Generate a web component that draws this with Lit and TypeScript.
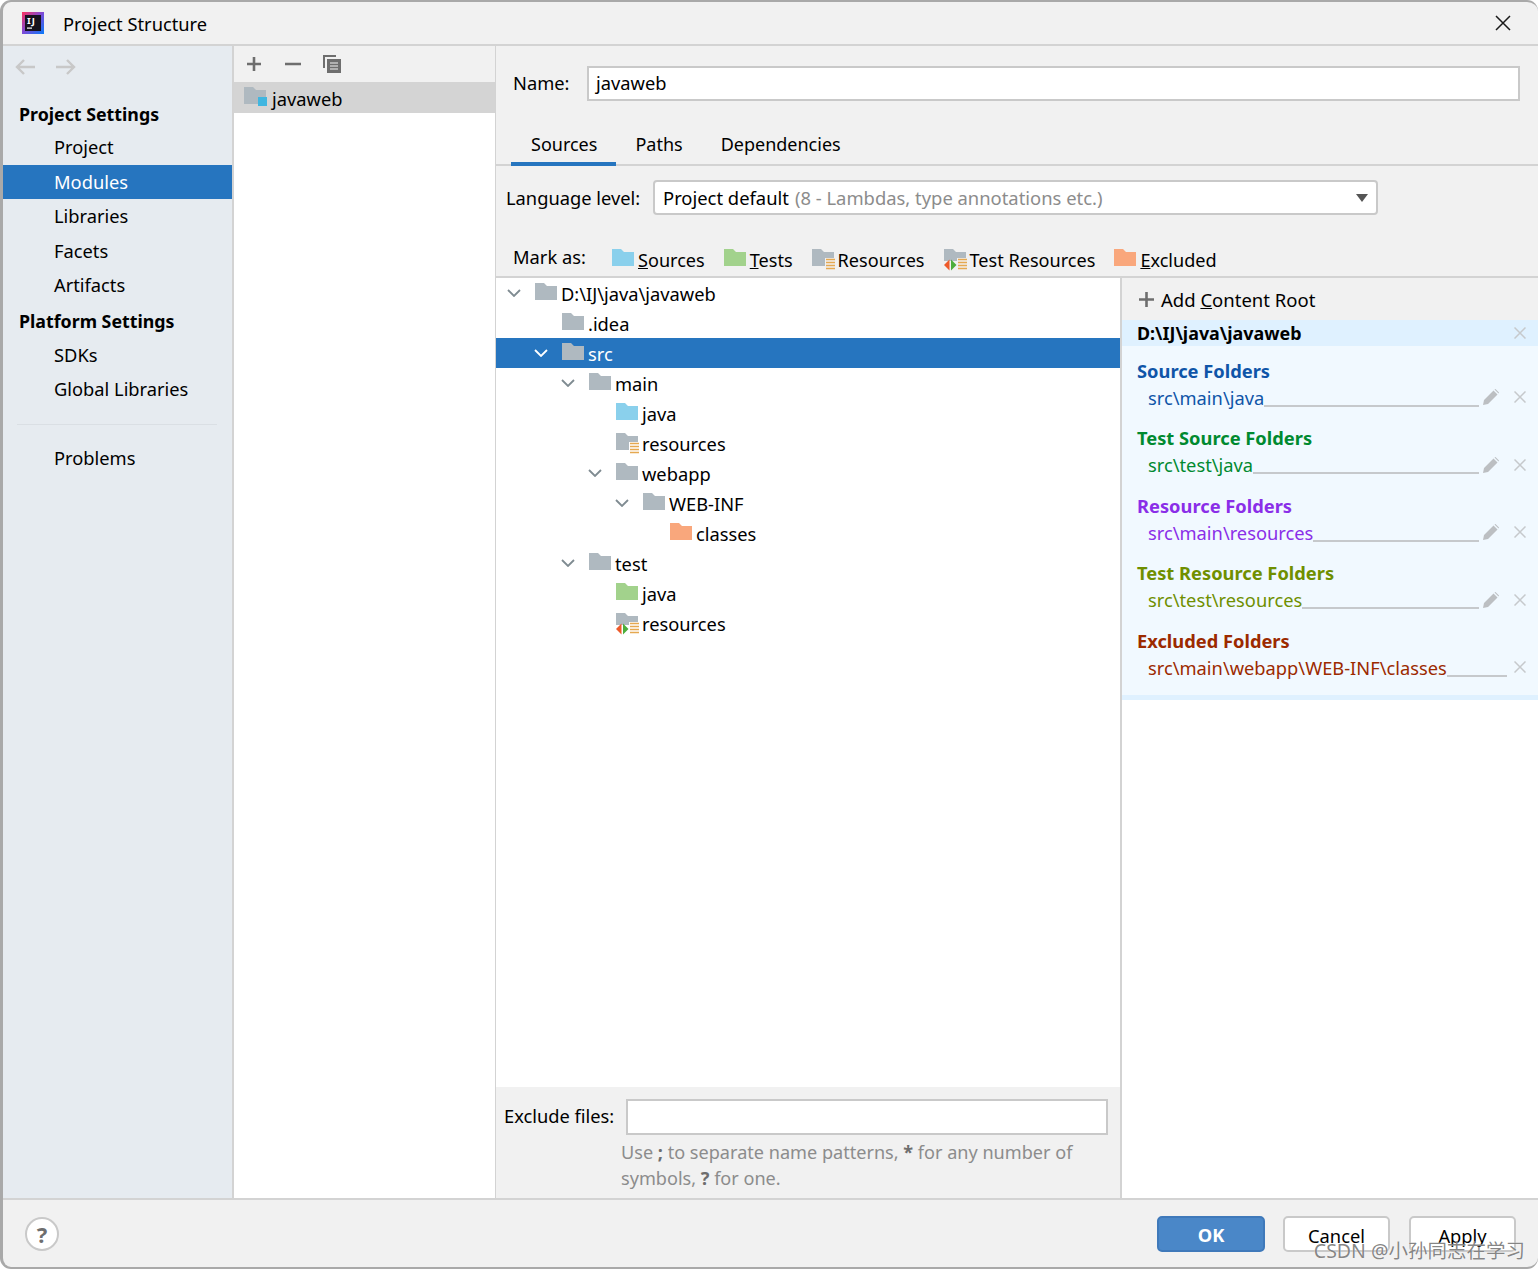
import { LitElement, html, css, svg } from 'lit';
import { customElement } from 'lit/decorators.js';

type FolderKind = 'plain' | 'source' | 'test' | 'resource' | 'testres' | 'excluded' | 'module';

const FOLDER_COLORS: Record<string, string> = {
  plain: '#afb9c0',
  module: '#afb9c0',
  resource: '#afb9c0',
  testres: '#afb9c0',
  source: '#8ad0ec',
  test: '#a2d28c',
  excluded: '#f9a77c',
};

const FOLDER_PATHS: Record<string, string> = {
  resource: 'M0 1h9l3 3h10v6h-9v8H0z',
  testres: 'M0 1h9l3 3h10v6h-9v3H0z',
};

function folder(kind: FolderKind) {
  const hasStripes = kind === 'resource' || kind === 'testres';
  return html`<svg class="folder" width="24" height="24" viewBox="0 0 24 24">
    <path d=${FOLDER_PATHS[kind] ?? 'M0 1h9l3 3h10v14H0z'} fill=${FOLDER_COLORS[kind]}/>
    ${hasStripes
      ? svg`<path d="M14 11.500h9M14 14.500h9M14 17.500h9M14 20.500h9" stroke="#e5a951" stroke-width="1.600"/>`
      : ''}
    ${kind === 'testres'
      ? svg`<path d="M5.500 11.500v11L0 17z" fill="#ee5a2a"/><path d="M7 11.500v11l5.500-5.500z" fill="#4cae3c"/>`
      : ''}
    ${kind === 'module' ? svg`<rect x="14" y="11" width="9" height="9" fill="#40b6e0"/>` : ''}
  </svg>`;
}

const closeIcon = html`<svg width="12" height="12" viewBox="0 0 12 12">
  <path d="M.5.500l11 11M11.500.500l-11 11" stroke="#c6c9cc" stroke-width="1.500" fill="none"/>
</svg>`;

const pencilIcon = html`<svg class="pencil" width="16" height="16" viewBox="0 0 16 16">
  <path d="M0 16l1-5L10.500 1.500l4 4L5 15z M11.500.500l1-.500 3.500 3.500-.5 1z" fill="#bcbfc2"/>
</svg>`;

const chevron = (color: string) => html`<svg width="14" height="8" viewBox="0 0 14 8">
  <path d="M1 1l6 6 6-6" stroke=${color} stroke-width="1.800" fill="none"/>
</svg>`;

const TREE: { depth: number; label: string; kind: FolderKind; open?: boolean; selected?: boolean }[] = [
  { depth: 0, label: 'D:\\IJ\\java\\javaweb', kind: 'plain', open: true },
  { depth: 1, label: '.idea', kind: 'plain' },
  { depth: 1, label: 'src', kind: 'plain', open: true, selected: true },
  { depth: 2, label: 'main', kind: 'plain', open: true },
  { depth: 3, label: 'java', kind: 'source' },
  { depth: 3, label: 'resources', kind: 'resource' },
  { depth: 3, label: 'webapp', kind: 'plain', open: true },
  { depth: 4, label: 'WEB-INF', kind: 'plain', open: true },
  { depth: 5, label: 'classes', kind: 'excluded' },
  { depth: 2, label: 'test', kind: 'plain', open: true },
  { depth: 3, label: 'java', kind: 'test' },
  { depth: 3, label: 'resources', kind: 'testres' },
];

const ROOTS = [
  { title: 'Source Folders', path: 'src\\main\\java', cls: 'c-source', edit: true },
  { title: 'Test Source Folders', path: 'src\\test\\java', cls: 'c-test', edit: true },
  { title: 'Resource Folders', path: 'src\\main\\resources', cls: 'c-res', edit: true },
  { title: 'Test Resource Folders', path: 'src\\test\\resources', cls: 'c-testres', edit: true },
  { title: 'Excluded Folders', path: 'src\\main\\webapp\\WEB-INF\\classes', cls: 'c-excl', edit: false },
];

@customElement('app-root')
export class AppRoot extends LitElement {
  static styles = css`
    :host {
      display: block;
      width: 1538px;
      height: 1269px;
      background: #fff;
      font-family: 'Noto Sans', 'Noto Sans CJK SC', sans-serif;
      font-size: 18.300px;
      color: #000;
      overflow: hidden;
    }
    .window {
      position: relative;
      box-sizing: border-box;
      width: 1538px;
      height: 1269px;
      display: flex;
      flex-direction: column;
      background: #f1f1f1;
      border: solid #a9a9a9;
      border-width: 2px 0 2px 3px;
      border-radius: 11px;
      overflow: hidden;
    }
    svg { display: block; flex: none; }

    .title {
      flex: none;
      height: 42px;
      display: flex;
      align-items: center;
      padding-left: 19px;
      border-bottom: 2px solid #d3d3d3;
    }
    .title .name { margin-left: 19px; padding-top: 1px; }
    .title .close { margin-left: auto; margin-right: 27px; }

    .main { flex: 1; display: flex; min-height: 0; }

    .side {
      flex: none;
      width: 229px;
      background: #e6ebf0;
      border-right: 2px solid #d3d3d3;
      padding-top: 6px;
    }
    .nav { display: flex; gap: 19px; padding: 6px 0 0 11px; height: 39px; }
    .side .head { height: 35px; line-height: 36px; padding-left: 16px; font-weight: 700; font-size: 17.800px; }
    .side .head.first { height: 33px; line-height: 35px; }
    .side .item { height: 34.500px; line-height: 34.500px; padding-left: 51px; }
    .side .item.on { background: #2675bf; color: #fff; }
    .side hr { border: 0; height: 1px; background: #dadfe4; margin: 17px 15px 16px 14px; }

    .modules {
      flex: none;
      width: 261px;
      background: #fff;
      border-right: 1px solid #d3d3d3;
    }
    .tools {
      height: 36px;
      background: #f1f1f1;
      display: flex;
      align-items: center;
      gap: 19.500px;
      padding-left: 11px;
    }
    .mod {
      height: 31px;
      background: #d4d4d4;
      display: flex;
      align-items: center;
      padding-left: 10px;
      gap: 4px;
    }
    .mod span { padding-top: 1px; }

    .detail { flex: 1; display: flex; flex-direction: column; min-width: 0; }
    .name-row { flex: none; display: flex; align-items: center; margin-top: 20px; height: 35px; padding-left: 17px; }
    .name-row .lbl { width: 74px; padding-bottom: 2px; }
    .input {
      box-sizing: border-box;
      background: #fff;
      border: 2px solid #c9c9c9;
      display: flex;
      align-items: center;
    }
    .name-row .input { width: 933px; height: 35px; padding: 0 0 2px 7px; }

    .tabs {
      flex: none;
      display: flex;
      margin-top: 23px;
      height: 40px;
      padding-left: 15px;
      border-bottom: 2px solid #d3d3d3;
      font-size: 18px;
    }
    .tab { padding: 0 19px; line-height: 40px; height: 40px; box-sizing: border-box; }
    .tab.on { border-bottom: 4px solid #2675bf; height: 42px; padding: 0 19px 0 20px; }

    .lang { flex: none; display: flex; align-items: center; margin-top: 14px; height: 35px; padding-left: 10px; }
    .lang .lbl { width: 147px; }
    .combo {
      box-sizing: border-box;
      width: 725px;
      height: 35px;
      background: #fff;
      border: 2px solid #c9c9c9;
      border-radius: 4px;
      display: flex;
      align-items: center;
      padding: 0 8px 0 8px;
      font-size: 18.400px;
    }
    .combo .dim { color: #8c8c8c; margin-left: 6px; }
    .combo .arrow { margin-left: auto; width: 0; height: 0; border: 6.500px solid transparent; border-top: 8px solid #555; border-bottom: 0; }

    .mark {
      flex: none;
      box-sizing: border-box;
      height: 63px;
      display: flex;
      align-items: flex-end;
      padding: 0 0 4px 17px;
      border-bottom: 2px solid #d3d3d3;
      font-size: 18.100px;
    }
    .mark .label { width: 99px; margin-bottom: 3px; font-size: 18.300px; }
    .mark .opt { display: flex; align-items: center; gap: 2px; margin-right: 19px; }

    .split { flex: 1; display: flex; min-height: 0; }
    .left { flex: none; width: 624px; display: flex; flex-direction: column; }
    .tree { flex: 1; background: #fff; }
    .row { height: 30px; display: flex; align-items: center; box-sizing: border-box; }
    .row.sel { background: #2675bf; color: #fff; }
    .row .chev { flex: none; width: 28px; }
    .row .folder { margin-right: 2px; margin-top: 2px; }

    .excl { flex: none; height: 111px; box-sizing: border-box; padding: 12px 0 0 8px; }
    .excl .line { display: flex; align-items: center; }
    .excl .lbl { width: 122px; padding-bottom: 3px; }
    .excl .input { width: 482px; height: 36px; }
    .hint { margin: 4px 0 0 117px; width: 460px; line-height: 26px; color: #8c8c8c; font-size: 18.100px; }
    .hint b { color: #6e6e6e; }

    .right { flex: 1; border-left: 2px solid #d3d3d3; display: flex; flex-direction: column; background: #fff; }
    .add { flex: none; height: 42px; background: #f1f1f1; display: flex; align-items: center; padding-left: 16px; gap: 6px; font-size: 18.500px; }
    .root-head {
      flex: none;
      height: 26px;
      background: #dff1ff;
      display: flex;
      align-items: center;
      padding: 0 12px 0 15px;
      font-weight: 700;
      font-size: 17.900px;
      justify-content: space-between;
    }
    .roots { flex: none; height: 349px; box-sizing: border-box; background: #f1f9ff; padding-top: 10.700px; }
    .strip { flex: none; height: 5px; background: #dff1ff; }
    .group { height: 67.500px; }
    .group .t { padding-left: 15px; font-weight: 700; height: 27px; line-height: 27px; }
    .group .p { display: flex; align-items: center; height: 27px; padding: 0 12px 0 26px; }
    .group .rule { flex: 1; border-bottom: 2px solid #c6c9cc; align-self: flex-end; margin-bottom: 4px; height: 0; }
    .group .pencil { margin-left: 4px; }
    .group .xw { margin-left: 15px; }
    .group .xw.solo { margin-left: 7px; }
    .c-source { color: #0f55a8; }
    .c-test { color: #008a30; }
    .c-res { color: #8a2ee8; }
    .c-testres { color: #6f8f00; }
    .c-excl { color: #9c2a00; }

    .footer {
      flex: none;
      height: 67px;
      border-top: 2px solid #d3d3d3;
      display: flex;
      align-items: center;
      padding: 0 22px 0 22px;
    }
    .help {
      box-sizing: border-box;
      width: 34px;
      height: 34px;
      border-radius: 50%;
      border: 2px solid #c9c9c9;
      background: #fff;
      color: #6e6e6e;
      font-weight: 700;
      font-size: 22px;
      display: flex;
      align-items: center;
      justify-content: center;
    }
    .btn {
      box-sizing: border-box;
      width: 107px;
      height: 36px;
      border: 2px solid #c9c9c9;
      border-radius: 5px;
      background: #fff;
      display: flex;
      align-items: center;
      justify-content: center;
      padding-top: 3px;
      margin-left: 19px;
    }
    .btn.cancel { margin-left: 18px; }
    .btn.ok { width: 108px; margin-left: auto; padding-top: 1px; background: #4a87c8; border-color: #3f79ba; color: #fff; font-weight: 700; }
    .wm {
      position: absolute;
      right: 13px;
      bottom: 3px;
      font-size: 19.500px;
      color: rgba(80, 80, 80, 0.7);
      white-space: nowrap;
      text-shadow: 0 0 1px #fff;
    }
  `;

  render() {
    return html`<div class="window">
      <div class="title">
        <svg width="22" height="22" viewBox="0 0 22 22">
          <defs>
            <linearGradient id="ij" x1="0" y1="0" x2="1" y2="1">
              <stop offset="0" stop-color="#fe315d"/>
              <stop offset="0.5" stop-color="#7a4bd8"/>
              <stop offset="1" stop-color="#087cfa"/>
            </linearGradient>
          </defs>
          <rect width="22" height="22" fill="url(#ij)"/>
          <rect x="3" y="3" width="16" height="16" fill="#17121e"/>
          <text x="5" y="12" font-size="9.500" font-weight="700" letter-spacing="1" fill="#fff" font-family="Noto Sans">IJ</text>
          <rect x="5" y="15.500" width="5" height="1.200" fill="#fff"/>
        </svg>
        <span class="name">Project Structure</span>
        <svg class="close" width="16" height="16" viewBox="0 0 16 16">
          <path d="M1 1l14 14M15 1L1 15" stroke="#1a1a1a" stroke-width="1.500" fill="none"/>
        </svg>
      </div>

      <div class="main">
        <div class="side">
          <div class="nav">
            <svg width="22" height="18" viewBox="0 0 22 18"><path d="M21 9H3M10 2L3 9l7 7" stroke="#c8c8c8" stroke-width="2.400" fill="none"/></svg>
            <svg width="22" height="18" viewBox="0 0 22 18"><path d="M1 9h18M12 2l7 7-7 7" stroke="#c8c8c8" stroke-width="2.400" fill="none"/></svg>
          </div>
          <div class="head first">Project Settings</div>
          <div class="item">Project</div>
          <div class="item on">Modules</div>
          <div class="item">Libraries</div>
          <div class="item">Facets</div>
          <div class="item">Artifacts</div>
          <div class="head">Platform Settings</div>
          <div class="item">SDKs</div>
          <div class="item">Global Libraries</div>
          <hr />
          <div class="item">Problems</div>
        </div>

        <div class="modules">
          <div class="tools">
            <svg width="18" height="18" viewBox="0 0 18 18"><path d="M9 2v14M2 9h14" stroke="#6e6e6e" stroke-width="2.600"/></svg>
            <svg width="20" height="18" viewBox="0 0 20 18"><path d="M2 9h16" stroke="#6e6e6e" stroke-width="2.600"/></svg>
            <svg width="20" height="20" viewBox="0 0 20 20">
              <path d="M1 1h13v2H3v11H1z" fill="#6e6e6e"/>
              <path d="M5 5h14v14H5z" fill="#6e6e6e"/>
              <path d="M8 9h8M8 12h8M8 15h8" stroke="#f1f1f1" stroke-width="1.200"/>
            </svg>
          </div>
          <div class="mod">${folder('module')}<span>javaweb</span></div>
        </div>

        <div class="detail">
          <div class="name-row"><span class="lbl">Name:</span><div class="input">javaweb</div></div>
          <div class="tabs">
            <div class="tab on">Sources</div>
            <div class="tab">Paths</div>
            <div class="tab">Dependencies</div>
          </div>
          <div class="lang">
            <span class="lbl">Language level:</span>
            <div class="combo">
              <span>Project default</span>
              <span class="dim">(8 - Lambdas, type annotations etc.)</span>
              <span class="arrow"></span>
            </div>
          </div>
          <div class="mark">
            <span class="label">Mark as:</span>
            <span class="opt">${folder('source')}<span><u>S</u>ources</span></span>
            <span class="opt">${folder('test')}<span><u>T</u>ests</span></span>
            <span class="opt">${folder('resource')}<span>Resources</span></span>
            <span class="opt">${folder('testres')}<span>Test Resources</span></span>
            <span class="opt">${folder('excluded')}<span><u>E</u>xcluded</span></span>
          </div>
          <div class="split">
            <div class="left">
              <div class="tree">
                ${TREE.map(
                  n => html`<div class="row ${n.selected ? 'sel' : ''}" style="padding-left:${11 + n.depth * 27}px">
                    <span class="chev">${n.open ? chevron(n.selected ? '#fff' : '#7f8b91') : ''}</span>
                    ${folder(n.kind)}<span>${n.label}</span>
                  </div>`,
                )}
              </div>
              <div class="excl">
                <div class="line"><span class="lbl">Exclude files:</span><div class="input"></div></div>
                <div class="hint">Use <b>;</b> to separate name patterns, <b>*</b> for any number of symbols, <b>?</b> for one.</div>
              </div>
            </div>
            <div class="right">
              <div class="add">
                <svg width="17" height="17" viewBox="0 0 17 17"><path d="M8.500 1v15M1 8.500h15" stroke="#6e6e6e" stroke-width="2.600"/></svg>
                <span>Add <u>C</u>ontent Root</span>
              </div>
              <div class="root-head"><span>D:\\IJ\\java\\javaweb</span>${closeIcon}</div>
              <div class="roots">
                ${ROOTS.map(
                  r => html`<div class="group ${r.cls}">
                    <div class="t">${r.title}</div>
                    <div class="p">
                      <span>${r.path}</span><span class="rule"></span>
                      ${r.edit ? pencilIcon : ''}
                      <span class="xw ${r.edit ? '' : 'solo'}">${closeIcon}</span>
                    </div>
                  </div>`,
                )}
              </div>
              <div class="strip"></div>
            </div>
          </div>
        </div>
      </div>

      <div class="footer">
        <div class="help">?</div>
        <div class="btn ok">OK</div>
        <div class="btn cancel">Cancel</div>
        <div class="btn">Apply</div>
      </div>
      <div class="wm">CSDN @小孙同志在学习</div>
    </div>`;
  }
}
